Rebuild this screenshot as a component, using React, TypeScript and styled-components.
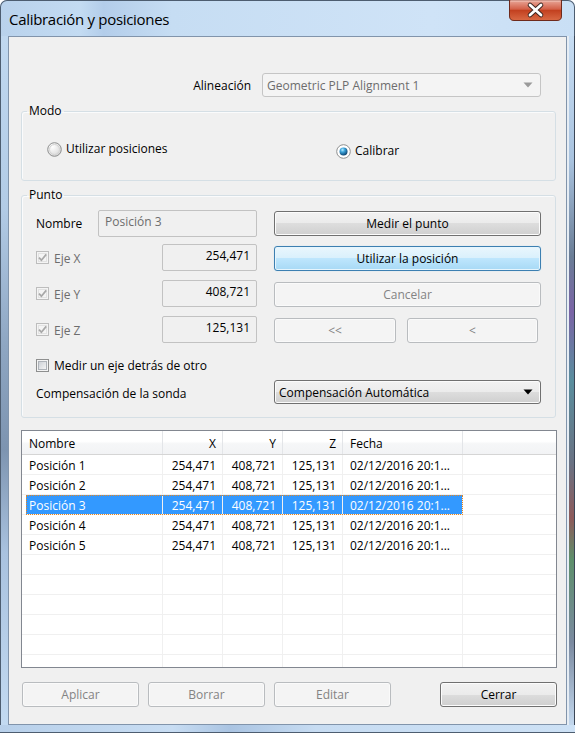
import React from "react";
import styled, { createGlobalStyle, css } from "styled-components";

const Global = createGlobalStyle`
  html, body { margin: 0; padding: 0; background: #ffffff; }
  body {
    font-family: "Open Sans", "Noto Sans", "Liberation Sans", sans-serif;
    font-size: 12px;
    color: #000;
  }
  * { box-sizing: border-box; }
`;

const Window = styled.div`
  width: 575px;
  height: 733px;
  display: grid;
  grid-template-columns: 8px 559px 8px;
  grid-template-rows: 36px 689px 8px;
  background: linear-gradient(
    to right,
    #b9d2ec 0%,
    #c3dbf2 14%,
    #b3cdea 18%,
    #c6ddf3 30%,
    #cfe3f7 75%,
    #c9dff5 100%
  );
  border-radius: 7px 7px 0 0;
  box-shadow: inset 0 0 0 1px #4d5d70;
  overflow: hidden;
`;

const TitleBar = styled.div`
  grid-column: 1 / -1;
  grid-row: 1;
  display: flex;
  align-items: flex-start;
  padding-left: 9px;
`;

const Title = styled.div`
  margin-top: 9px;
  font-size: 15px;
  line-height: 20px;
  color: #000;
  letter-spacing: -0.3px;
`;

const CloseBtn = styled.div`
  margin-left: auto;
  margin-right: 13px;
  width: 53px;
  height: 21px;
  display: flex;
`;

const LeftFrame = styled.div`
  grid-column: 1;
  grid-row: 2;
  background: linear-gradient(
    to bottom,
    #c0d8f0 0%,
    #b2cbe6 25%,
    #8ea6c2 45%,
    #7d94b0 60%,
    #a9c2df 75%,
    #c3daf1 100%
  );
  box-shadow: inset 1px 0 0 #4d5d70;
`;

const RightFrame = styled.div`
  grid-column: 3;
  grid-row: 2;
  background: linear-gradient(
    to bottom,
    #c7ddf3 0%,
    #a9c3df 18%,
    #6a7d96 32%,
    #7a64a6 40%,
    #5a8e9e 50%,
    #6a7283 62%,
    #8d5a5a 70%,
    #5d8f6b 76%,
    #7b8aa0 88%,
    #c3d8ee 100%
  );
  box-shadow: inset 2px 0 0 #e6edf4, inset -1px 0 0 #3b4656;
`;

const BottomFrame = styled.div`
  grid-column: 1 / -1;
  grid-row: 3;
  background: linear-gradient(
    to right,
    #b8d0ea 0%,
    #c8ddf3 30%,
    #aac4e2 40%,
    #c7dcf2 55%,
    #cde1f5 100%
  );
  box-shadow: inset 0 -1px 0 #4d5d70;
`;

const Client = styled.div`
  grid-column: 2;
  grid-row: 2;
  border: 1px solid #8194ab;
  background: #f0f0f0;
  padding: 36px 10px 0 12px;
  display: flex;
  flex-direction: column;
`;

const AlignRow = styled.div`
  display: grid;
  grid-template-columns: 230px 279px;
  column-gap: 11px;
  align-items: center;
  height: 24px;
`;

const RightLabel = styled.div`
  text-align: right;
`;

const Combo = styled.div<{ $disabled?: boolean }>`
  height: 24px;
  display: flex;
  align-items: center;
  padding: 0 7px 0 4px;
  border-radius: 3px;
  ${(p) =>
    p.$disabled
      ? css`
          border: 1px solid #c5c5c5;
          background: #f4f4f4;
          color: #6d6d6d;
        `
      : css`
          border: 1px solid #707070;
          background: linear-gradient(#f2f2f2 0%, #ebebeb 50%, #dddddd 50%, #cfcfcf 100%);
          box-shadow: inset 0 0 0 1px #fbfbfb;
          color: #000;
        `}
`;

const ComboText = styled.span`
  flex: 1;
  white-space: nowrap;
  overflow: hidden;
`;

const Group = styled.fieldset<{ $h: number }>`
  margin: 6px 0 0;
  padding: 0;
  border: 1px solid #d5dfe5;
  border-radius: 3px;
  min-width: 0;
  height: ${(p) => p.$h}px;
  box-shadow: inset 1px 1px 0 #fafbfc;
`;

const Legend = styled.legend`
  padding: 0 2px;
  margin-left: 5px;
  line-height: 16px;
  font-size: 12px;
`;

const RadioRow = styled.div`
  display: grid;
  grid-template-columns: 289px auto;
  padding: 22px 0 0 25px;
  align-items: start;
`;

const RadioLabel = styled.label<{ $dy?: number }>`
  display: flex;
  align-items: center;
  gap: 4px;
  margin-top: ${(p) => p.$dy ?? 0}px;
  line-height: 16px;
`;

const PuntoBody = styled.div`
  padding: 7px 0 0 14px;
  display: flex;
  flex-direction: column;
`;

const FieldRow = styled.div<{ $mt: number; $h: number }>`
  display: grid;
  grid-template-columns: 221px 267px;
  column-gap: 17px;
  height: ${(p) => p.$h}px;
  margin-top: ${(p) => p.$mt}px;
  align-items: center;
`;

const LeftCell = styled.div`
  display: flex;
  align-items: center;
  height: 100%;
`;

const NameLabel = styled.div<{ $w?: number; $dy?: number }>`
  width: ${(p) => (p.$w ? `${p.$w}px` : "auto")};
  margin-top: ${(p) => p.$dy ?? 0}px;
  flex-shrink: 0;
  white-space: nowrap;
`;

const CheckLabel = styled.label<{ $w?: number; $disabled?: boolean }>`
  display: flex;
  align-items: center;
  gap: 5px;
  width: ${(p) => (p.$w ? `${p.$w}px` : "auto")};
  flex-shrink: 0;
  color: ${(p) => (p.$disabled ? "#6d6d6d" : "#000")};
  white-space: nowrap;
  & > span { margin-top: 1px; }
`;

const TextBox = styled.div<{ $w: number; $align?: "left" | "right"; $disabled?: boolean }>`
  width: ${(p) => p.$w}px;
  height: 27px;
  border: 1px solid #c2c2c2;
  border-radius: 2px;
  background: #f0f0f0;
  padding: 2px 6px 0 6px;
  line-height: 18px;
  text-align: ${(p) => p.$align ?? "left"};
  color: ${(p) => (p.$disabled ? "#6d6d6d" : "#000")};
`;

type BtnKind = "normal" | "focus" | "disabled";

const Btn = styled.div<{ $kind: BtnKind; $w?: number; $self?: string }>`
  height: 25px;
  width: ${(p) => (p.$w ? `${p.$w}px` : "100%")};
  align-self: ${(p) => p.$self ?? "center"};
  border-radius: 3px;
  display: flex;
  align-items: center;
  justify-content: center;
  white-space: nowrap;
  ${(p) =>
    p.$kind === "normal"
      ? css`
          border: 1px solid #707070;
          background: linear-gradient(#f2f2f2 0%, #ebebeb 50%, #dddddd 50%, #cfcfcf 100%);
          box-shadow: inset 0 0 0 1px #fcfcfc;
          color: #000;
        `
      : p.$kind === "focus"
      ? css`
          border: 1px solid #3c7fb1;
          background: linear-gradient(#eaf6fd 0%, #d9f0fc 50%, #bee6fd 50%, #a7d9f5 100%);
          box-shadow: inset 0 0 0 1px #e6f5fd, 0 0 1px #9fd5f4;
          color: #000;
        `
      : css`
          border: 1px solid #b9bcbf;
          background: #f4f4f4;
          box-shadow: inset 0 0 0 1px #fafafa;
          color: #838383;
        `}
`;

const BtnPair = styled.div`
  display: flex;
  gap: 11px;
  align-self: end;
`;

const ListView = styled.div`
  margin: 12px -1px 0 0;
  height: 238px;
  border: 1px solid #828790;
  background: #ffffff;
  overflow: hidden;
`;

const Row = styled.div<{ $head?: boolean }>`
  display: flex;
  height: ${(p) => (p.$head ? 24 : 20)}px;
  ${(p) =>
    p.$head &&
    css`
      background: linear-gradient(#ffffff 0%, #ffffff 45%, #f6f7f8 55%, #f2f3f5 100%);
      border-bottom: 1px solid #d5d5d5;
    `}
`;

const RowMain = styled.div<{ $sel?: boolean }>`
  display: grid;
  grid-template-columns: 141px 60px 60px 60px 120px;
  position: relative;
  ${(p) =>
    p.$sel &&
    css`
      background: linear-gradient(to right, transparent 4px, #3399ff 4px);
      color: #ffffff;
      &::after {
        content: "";
        position: absolute;
        left: 4px;
        right: 0;
        top: 0;
        bottom: 0;
        border: 1px dotted #e8861e;
        pointer-events: none;
      }
    `}
`;

const Cell = styled.div<{ $right?: boolean; $head?: boolean }>`
  display: flex;
  align-items: center;
  justify-content: ${(p) => (p.$right ? "flex-end" : "flex-start")};
  padding: ${(p) => (p.$head ? "2px" : "1px")} ${(p) => (p.$right ? "6px" : "0")} 0
    ${(p) => (p.$right ? "0" : "7px")};
  white-space: nowrap;
  overflow: hidden;
  border-right: 1px solid ${(p) => (p.$head ? "#e3e5e8" : "#f0f0f0")};
  ${(p) => !p.$head && css`border-bottom: 1px solid #f0f0f0;`}
`;

const TailCell = styled.div<{ $head?: boolean }>`
  flex: 1;
  ${(p) => !p.$head && css`border-bottom: 1px solid #f0f0f0;`}
`;

const ButtonRow = styled.div`
  display: flex;
  gap: 9px;
  height: 26px;
  margin: 13px -1px 0 1px;
`;

const Spacer = styled.div`
  flex: 1;
`;

const Arrow = ({ color }: { color: string }) => (
  <svg width="10" height="6" viewBox="0 0 10 6">
    <path d="M0.5 0.5 L9.5 0.5 L5 5.5 Z" fill={color} />
  </svg>
);

const CheckBox = ({ checked, disabled }: { checked?: boolean; disabled?: boolean }) => (
  <svg width="13" height="13" viewBox="0 0 13 13" style={{ flexShrink: 0 }}>
    <defs>
      <linearGradient id="cbIn" x1="0" y1="0" x2="1" y2="1">
        <stop offset="0" stopColor="#cbcfd5" />
        <stop offset="1" stopColor="#f6f6f6" />
      </linearGradient>
    </defs>
    {disabled ? (
      <>
        <rect x="0.5" y="0.5" width="12" height="12" fill="#f4f4f4" stroke="#bdbdbd" />
        <rect x="2.5" y="2.5" width="8" height="8" fill="#f4f4f4" stroke="#e2e2e2" />
      </>
    ) : (
      <>
        <rect x="0.5" y="0.5" width="12" height="12" fill="#f4f4f4" stroke="#8e8f8f" />
        <rect x="2.5" y="2.5" width="8" height="8" fill="url(#cbIn)" stroke="#aeb3b9" />
      </>
    )}
    {checked && (
      <path
        d="M3 6.6 L5.4 9.2 L10.2 3.4"
        fill="none"
        stroke={disabled ? "#a8a8a8" : "#4a5f97"}
        strokeWidth="1.7"
      />
    )}
  </svg>
);

const Radio = ({ checked }: { checked?: boolean }) => (
  <svg width="15" height="15" viewBox="0 0 15 15" style={{ flexShrink: 0 }}>
    <defs>
      <radialGradient id="rOff" cx="0.35" cy="0.3" r="0.8">
        <stop offset="0" stopColor="#ffffff" />
        <stop offset="0.6" stopColor="#e6e6e6" />
        <stop offset="1" stopColor="#cfcfcf" />
      </radialGradient>
      <radialGradient id="rDot" cx="0.38" cy="0.3" r="0.75">
        <stop offset="0" stopColor="#b9ecff" />
        <stop offset="0.35" stopColor="#3fa6dc" />
        <stop offset="0.8" stopColor="#185c8d" />
        <stop offset="1" stopColor="#0c3a60" />
      </radialGradient>
    </defs>
    <circle cx="7.5" cy="7.5" r="6.8" fill={checked ? "#ffffff" : "url(#rOff)"} stroke="#8e8f8f" strokeWidth="1" />
    {checked ? (
      <circle cx="7.5" cy="7.5" r="4" fill="url(#rDot)" />
    ) : (
      <circle cx="7.5" cy="7.5" r="5" fill="none" stroke="#d4d4d4" strokeWidth="1" />
    )}
  </svg>
);

const CloseGlyph = () => (
  <svg width="53" height="21" viewBox="0 0 53 21">
    <defs>
      <linearGradient id="cg" x1="0" y1="0" x2="0" y2="1">
        <stop offset="0" stopColor="#e9a99b" />
        <stop offset="0.45" stopColor="#d35f47" />
        <stop offset="0.5" stopColor="#c2401f" />
        <stop offset="1" stopColor="#d96a45" />
      </linearGradient>
    </defs>
    <path
      d="M0.5 0 L52.5 0 L52.5 16 Q52.5 20.5 48 20.5 L5 20.5 Q0.5 20.5 0.5 16 Z"
      fill="url(#cg)"
      stroke="#6e2a1c"
    />
    <path d="M1.5 1 L51.5 1" stroke="#f3c7bc" strokeWidth="1" />
    <path d="M21 5 L32 15 M32 5 L21 15" stroke="#3a2520" strokeWidth="4.6" strokeLinecap="round" />
    <path d="M21 5 L32 15 M32 5 L21 15" stroke="#ffffff" strokeWidth="2.8" strokeLinecap="round" />
  </svg>
);

const positions = [1, 2, 3, 4, 5];

export default function App() {
  return (
    <>
      <Global />
      <Window>
        <TitleBar>
          <Title>Calibración y posiciones</Title>
          <CloseBtn>
            <CloseGlyph />
          </CloseBtn>
        </TitleBar>
        <LeftFrame />
        <Client>
          <AlignRow>
            <RightLabel>Alineación</RightLabel>
            <Combo $disabled>
              <ComboText>Geometric PLP Alignment 1</ComboText>
              <Arrow color="#9a9a9a" />
            </Combo>
          </AlignRow>

          <Group $h={78}>
            <Legend>Modo</Legend>
            <RadioRow>
              <RadioLabel>
                <Radio />
                <span>Utilizar posiciones</span>
              </RadioLabel>
              <RadioLabel $dy={2}>
                <Radio checked />
                <span>Calibrar</span>
              </RadioLabel>
            </RadioRow>
          </Group>

          <Group $h={231}>
            <Legend>Punto</Legend>
            <PuntoBody>
              <FieldRow $mt={0} $h={27}>
                <LeftCell>
                  <NameLabel $w={62}>Nombre</NameLabel>
                  <TextBox $w={159} $disabled>
                    Posición 3
                  </TextBox>
                </LeftCell>
                <Btn $kind="normal">Medir el punto</Btn>
              </FieldRow>
              <FieldRow $mt={7} $h={27}>
                <LeftCell>
                  <CheckLabel $w={126} $disabled>
                    <CheckBox checked disabled />
                    <span>Eje X</span>
                  </CheckLabel>
                  <TextBox $w={95} $align="right">
                    254,471
                  </TextBox>
                </LeftCell>
                <Btn $kind="focus" $self="end">
                  Utilizar la posición
                </Btn>
              </FieldRow>
              <FieldRow $mt={9} $h={27}>
                <LeftCell>
                  <CheckLabel $w={126} $disabled>
                    <CheckBox checked disabled />
                    <span>Eje Y</span>
                  </CheckLabel>
                  <TextBox $w={95} $align="right">
                    408,721
                  </TextBox>
                </LeftCell>
                <Btn $kind="disabled" $self="end">
                  Cancelar
                </Btn>
              </FieldRow>
              <FieldRow $mt={9} $h={27}>
                <LeftCell>
                  <CheckLabel $w={126} $disabled>
                    <CheckBox checked disabled />
                    <span>Eje Z</span>
                  </CheckLabel>
                  <TextBox $w={95} $align="right">
                    125,131
                  </TextBox>
                </LeftCell>
                <BtnPair>
                  <Btn $kind="disabled" $w={122}>
                    &lt;&lt;
                  </Btn>
                  <Btn $kind="disabled" $w={131}>
                    &lt;
                  </Btn>
                </BtnPair>
              </FieldRow>
              <FieldRow $mt={13} $h={16}>
                <LeftCell>
                  <CheckLabel>
                    <CheckBox />
                    <span>Medir un eje detrás de otro</span>
                  </CheckLabel>
                </LeftCell>
              </FieldRow>
              <FieldRow $mt={8} $h={24}>
                <LeftCell>
                  <NameLabel $dy={3}>Compensación de la sonda</NameLabel>
                </LeftCell>
                <Combo>
                  <ComboText>Compensación Automática</ComboText>
                  <Arrow color="#000000" />
                </Combo>
              </FieldRow>
            </PuntoBody>
          </Group>

          <ListView>
            <Row $head>
              <RowMain>
                <Cell $head>Nombre</Cell>
                <Cell $head $right>
                  X
                </Cell>
                <Cell $head $right>
                  Y
                </Cell>
                <Cell $head $right>
                  Z
                </Cell>
                <Cell $head>Fecha</Cell>
              </RowMain>
              <TailCell $head />
            </Row>
            {positions.map((n) => (
              <Row key={n}>
                <RowMain $sel={n === 3}>
                  <Cell>Posición {n}</Cell>
                  <Cell $right>254,471</Cell>
                  <Cell $right>408,721</Cell>
                  <Cell $right>125,131</Cell>
                  <Cell>02/12/2016 20:1...</Cell>
                </RowMain>
                <TailCell />
              </Row>
            ))}
            {Array.from({ length: 7 }).map((_, i) => (
              <Row key={`e${i}`}>
                <RowMain>
                  <Cell />
                  <Cell />
                  <Cell />
                  <Cell />
                  <Cell />
                </RowMain>
                <TailCell />
              </Row>
            ))}
          </ListView>

          <ButtonRow>
            <Btn $kind="disabled" $w={117}>
              Aplicar
            </Btn>
            <Btn $kind="disabled" $w={117}>
              Borrar
            </Btn>
            <Btn $kind="disabled" $w={117}>
              Editar
            </Btn>
            <Spacer />
            <Btn $kind="normal" $w={117}>
              Cerrar
            </Btn>
          </ButtonRow>
        </Client>
        <RightFrame />
        <BottomFrame />
      </Window>
    </>
  );
}
